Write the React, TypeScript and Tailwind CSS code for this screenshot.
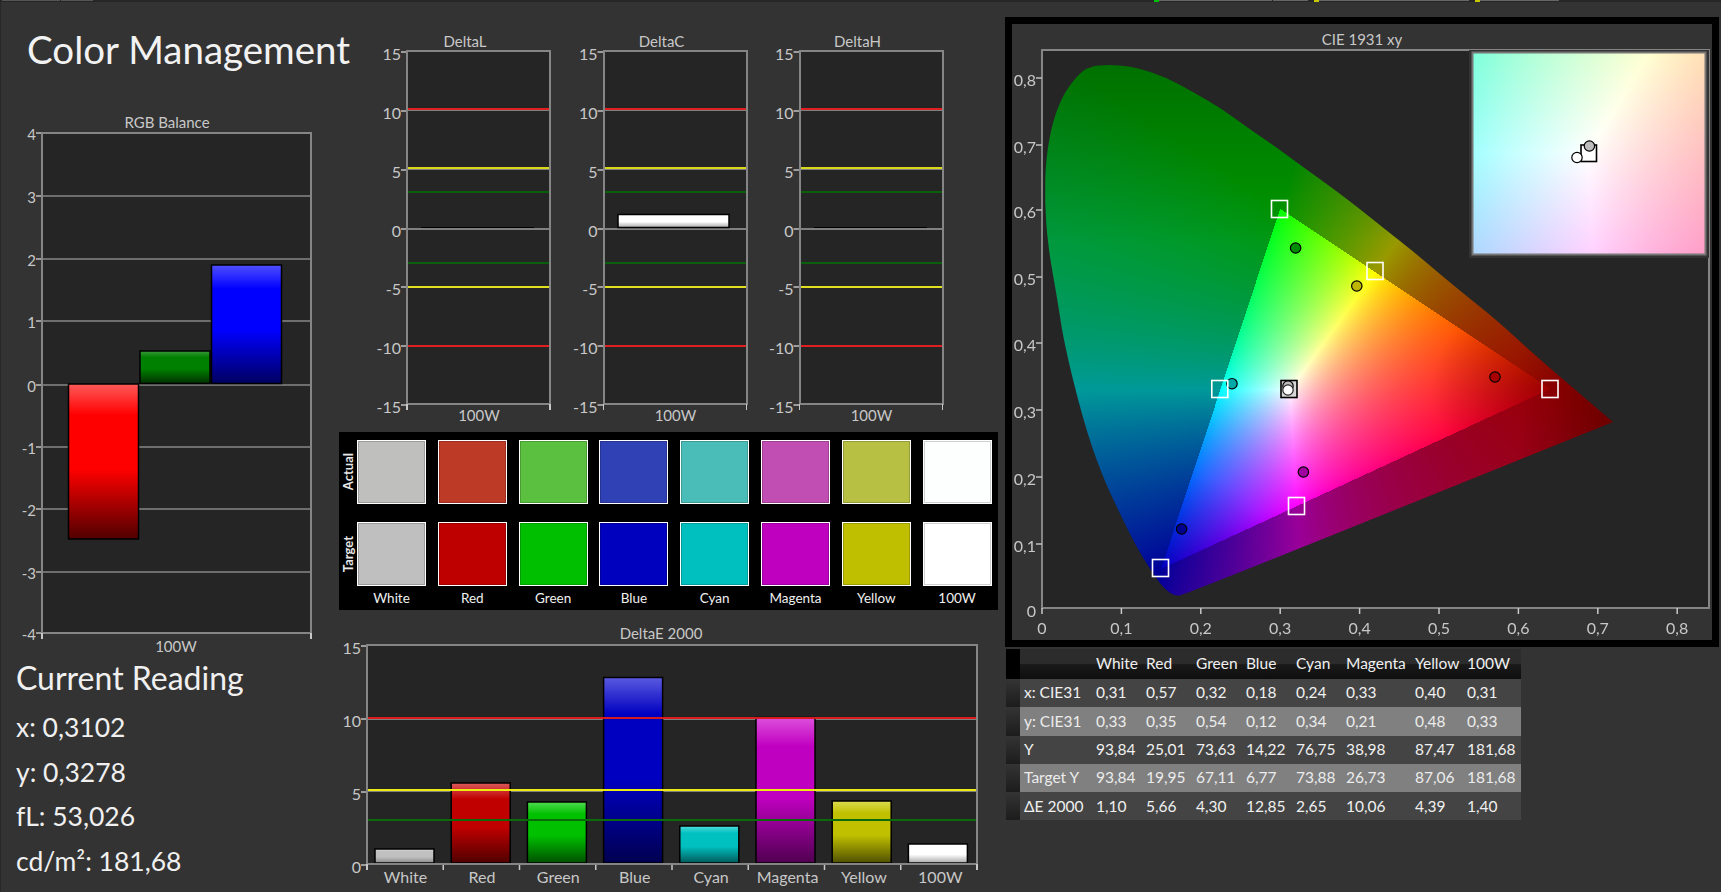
import type { ReactNode } from "react"

const FONT = "font-['Lato','Liberation_Sans',sans-serif]"

// bar gradients: top highlight, body, dark foot
const GRADIENTS: Record<string, string[]> = {
  rgbRed: ["#ff5a5a", "#ff0000", "#ff0000", "#500000"],
  rgbGreen: ["#3a9a3a", "#008000", "#008000", "#003000"],
  rgbBlue: ["#5050ff", "#0000ff", "#0000ff", "#000060"],
  white: ["#dcdcdc", "#c0c0c0", "#c0c0c0", "#8c8c8c"],
  red: ["#dc5a5a", "#c00000", "#c00000", "#500000"],
  green: ["#50dc50", "#00c000", "#00c000", "#005000"],
  blue: ["#5a5ae0", "#0000c0", "#0000c0", "#000050"],
  cyan: ["#50dcdc", "#00c0c0", "#00c0c0", "#005a5a"],
  magenta: ["#dc50dc", "#c000c0", "#c000c0", "#500050"],
  yellow: ["#dcdc50", "#c0c000", "#c0c000", "#505000"],
  full: ["#ffffff", "#ffffff", "#ffffff", "#a8a8a8"],
}

function Gradients() {
  return (
    <svg className="absolute h-0 w-0">
      <defs>
        {Object.entries(GRADIENTS).map(([id, c]) => (
          <linearGradient key={id} id={id} x1="0" y1="0" x2="0" y2="1">
            <stop offset="0" stopColor={c[0]} />
            <stop offset="0.2" stopColor={c[1]} />
            <stop offset="0.55" stopColor={c[2]} />
            <stop offset="1" stopColor={c[3]} />
          </linearGradient>
        ))}
      </defs>
    </svg>
  )
}

function Bar({ x, y, w, b, fill }: { x: number; y: number; w: number; b: number; fill: string }) {
  return <rect x={x} y={y} width={w} height={b - y} fill={`url(#${fill})`} stroke="#000" strokeWidth="1.5" />
}

function Plot({ l, t, r, b }: { l: number; t: number; r: number; b: number }) {
  return <rect x={l} y={t} width={r - l} height={b - t} fill="#252525" />
}

function Border({ l, t, r, b }: { l: number; t: number; r: number; b: number }) {
  return (
    <g shapeRendering="crispEdges">
      <rect x={l} y={t} width={r - l} height={b - t} fill="none" stroke="#858585" strokeWidth="2" />
      <line x1={l} x2={l} y1={b} y2={b + 6} stroke="#c8c8c8" strokeWidth="1.5" />
      <line x1={r} x2={r} y1={b} y2={b + 6} stroke="#c8c8c8" strokeWidth="1.5" />
    </g>
  )
}

function YTick({ x, y, label, size = 16 }: { x: number; y: number; label: string; size?: number }) {
  return (
    <g>
      <line x1={x - 6} x2={x} y1={y} y2={y} stroke="#c0c0c0" strokeWidth="1.5" />
      <text x={x - 6} y={y + 1} textAnchor="end" dominantBaseline="central" fontSize={size} fill="#c8c8c8">
        {label}
      </text>
    </g>
  )
}

function Hline({ l, r, y, color, w = 2 }: { l: number; r: number; y: number; color: string; w?: number }) {
  return <line x1={l} x2={r} y1={y} y2={y} stroke={color} strokeWidth={w} shapeRendering="crispEdges" />
}

function Label({ x, y, size = 15, children }: { x: number; y: number; size?: number; children: ReactNode }) {
  return (
    <text x={x} y={y} textAnchor="middle" dominantBaseline="central" fontSize={size} fill="#c8c8c8">
      {children}
    </text>
  )
}

function RgbBalance() {
  const ticks: [string, number][] = [
    ["4", 133], ["3", 196], ["2", 259], ["1", 321], ["0", 385], ["-1", 447], ["-2", 509], ["-3", 572], ["-4", 633],
  ]
  return (
    <svg width="339" height="555" viewBox="0 110 339 555" className="block">
      <Label x={167} y={122}>RGB Balance</Label>
      <Plot l={42} t={133} r={311} b={633} />
      {ticks.map(([t, y]) => (
        <g key={t}>
          <Hline l={42} r={311} y={y} color="#6e6e6e" />
          <YTick x={42} y={y} label={t} size={15} />
        </g>
      ))}
      <Border l={42} t={133} r={311} b={633} />
      <Bar x={68.5} y={384} w={70} b={539} fill="rgbRed" />
      <Bar x={140} y={351} w={70} b={383.5} fill="rgbGreen" />
      <Bar x={211.5} y={265} w={70} b={383.5} fill="rgbBlue" />
      <Label x={176} y={646}>100W</Label>
    </svg>
  )
}

function DeltaChart({ name, l, bar }: { name: string; l: number; bar: "line" | "white" }) {
  const r = l + 143
  const ticks: [string, number][] = [
    ["15", 52], ["10", 111], ["5", 170], ["0", 229], ["-5", 287], ["-10", 346], ["-15", 405],
  ]
  return (
    <g>
      <Label x={l + 58} y={41}>{name}</Label>
      <Plot l={l} t={51} r={r} b={404} />
      <Hline l={l} r={r} y={110.5} color="#808080" w={1} />
      <Hline l={l} r={r} y={169.5} color="#808080" w={1} />
      <Hline l={l} r={r} y={229} color="#808080" />
      <Hline l={l} r={r} y={109} color="#e02020" />
      <Hline l={l} r={r} y={168} color="#d8d818" />
      <Hline l={l} r={r} y={192} color="#0a5f0a" />
      <Hline l={l} r={r} y={263} color="#0a5f0a" />
      <Hline l={l} r={r} y={287} color="#e0e020" />
      <Hline l={l} r={r} y={346} color="#e02020" />
      {ticks.map(([t, y]) => (
        <YTick key={t} x={l} y={y} label={t} />
      ))}
      <Border l={l} t={51} r={r} b={404} />
      {bar === "line" ? (
        <line x1={l + 14} x2={l + 127} y1={227.5} y2={227.5} stroke="#000" strokeWidth="1" shapeRendering="crispEdges" />
      ) : (
        <Bar x={l + 14.5} y={214.5} w={111} b={227.5} fill="full" />
      )}
      <Label x={l + 72} y={415}>100W</Label>
    </g>
  )
}

const ACTUAL = ["#bfc0bd", "#bc3a26", "#5bc03f", "#2f41b5", "#4bbdb9", "#c14fb3", "#b8c044", "#fdfffe"]
const TARGET = ["#bfbfbf", "#bf0000", "#00bf00", "#0000bf", "#00bfbf", "#bf00bf", "#bfbf00", "#ffffff"]
const NAMES = ["White", "Red", "Green", "Blue", "Cyan", "Magenta", "Yellow", "100W"]

function SwatchRow({ title, colors }: { title: string; colors: string[] }) {
  return (
    <div className="flex h-[64px]">
      <div className="flex w-[18px] items-center justify-center">
        <span className="rotate-180 text-[13px] font-bold leading-none text-[#e8e8e8] [writing-mode:vertical-rl]">{title}</span>
      </div>
      <div className="grid grid-cols-[repeat(8,69px)] gap-x-[11.8px]">
        {colors.map((c) => (
          <div
            key={c}
            className="border border-white shadow-[inset_0_0_0_1px_rgba(0,0,0,0.18)]"
            style={{ backgroundColor: c }}
          />
        ))}
      </div>
    </div>
  )
}

function Swatches() {
  return (
    <div className="flex h-[178px] w-[659px] flex-col gap-y-[18px] bg-black pt-[8px]">
      <SwatchRow title="Actual" colors={ACTUAL} />
      <div className="flex flex-col">
        <SwatchRow title="Target" colors={TARGET} />
        <div className="ml-[18px] grid grid-cols-[repeat(8,69px)] gap-x-[11.8px] pt-[3px]">
          {NAMES.map((n) => (
            <span key={n} className="text-center text-[13.5px] leading-[18px] text-[#f0f0f0]">{n}</span>
          ))}
        </div>
      </div>
    </div>
  )
}

function DeltaE() {
  const bars: [string, number, string][] = [
    ["White", 849, "white"], ["Red", 783, "red"], ["Green", 802, "green"], ["Blue", 677.5, "blue"],
    ["Cyan", 826, "cyan"], ["Magenta", 717.5, "magenta"], ["Yellow", 801, "yellow"], ["100W", 844, "full"],
  ]
  return (
    <svg width="659" height="272" viewBox="339 620 659 272" className="block">
      <Label x={661} y={633}>DeltaE 2000</Label>
      <Plot l={367} t={645} r={977} b={864} />
      <Hline l={367} r={977} y={719.5} color="#808080" w={1} />
      <Hline l={367} r={977} y={791.5} color="#808080" w={1} />
      {bars.map(([n, y, g], i) => (
        <g key={n}>
          <Bar x={375 + i * 76.2} y={y} w={59} b={863} fill={g} />
          <line x1={367 + i * 76.25} x2={367 + i * 76.25} y1={864} y2={870} stroke="#c8c8c8" strokeWidth="1.5" />
          <Label x={405.5 + i * 76.4} y={876} size={16}>{n}</Label>
        </g>
      ))}
      <Hline l={367} r={977} y={718} color="#d81c1c" />
      <Hline l={367} r={977} y={790} color="#ecec10" />
      <Hline l={367} r={977} y={820} color="#0b6b0b" />
      <YTick x={367} y={646} label="15" />
      <YTick x={367} y={719} label="10" />
      <YTick x={367} y={792} label="5" />
      <YTick x={367} y={865} label="0" />
      <Border l={367} t={645} r={977} b={864} />
    </svg>
  )
}

// traced outline of the spectral locus, in page pixels
const LOCUS = [
  [1087, 68], [1099, 65], [1119.5, 65], [1138, 68], [1165.5, 77], [1193, 92], [1220.7, 108], [1248, 128],
  [1276, 147], [1303, 167], [1331, 187], [1358.6, 208], [1386, 230], [1414, 252], [1441, 275], [1469, 298],
  [1496.6, 320], [1538, 358], [1613, 422], [1184, 595], [1175, 596], [1165.5, 590], [1156, 578], [1138, 550],
  [1119.5, 513], [1101, 473], [1083, 420], [1064, 343], [1057.5, 300], [1048, 247], [1044.6, 200], [1046, 157],
  [1053, 120], [1064, 93], [1078, 75],
]

const clamp = (n: number) => Math.min(1, Math.max(0, n))

function shade(u: number, v: number, inset: boolean) {
  const X = u / v
  const Z = (1 - u - v) / v
  const rl = 3.2406 * X - 1.5372 - 0.4986 * Z
  const gl = -0.9689 * X + 1.8758 + 0.0415 * Z
  const bl = 0.0557 * X - 0.204 + 1.057 * Z
  const inside = rl >= 0 && gl >= 0 && bl >= 0
  const r = Math.max(rl, 0)
  const g = Math.max(gl, 0)
  const b = Math.max(bl, 0)
  const m = Math.max(r, g, b, 0.0001)
  let f = 1
  if (!inset) {
    if (inside) {
      f *= 1 - 0.4 * clamp(1 - Math.hypot(u - 0.64, v - 0.33) / 0.15)
      f *= 1 - 0.25 * clamp(1 - Math.hypot(u - 0.15, v - 0.06) / 0.15)
    } else {
      f = 0.6 - 0.6 * Math.max(0, v - 0.55) - 1.5 * Math.max(0, u - 0.6)
    }
  }
  const gamma = inset ? 1 / 2.2 : 1 / 1.2
  const ch = (c: number) => 255 * f * Math.pow(c / m, gamma)
  return [ch(r), ch(g), ch(b)]
}

function paintPixels(c: HTMLCanvasElement, at: (x: number, y: number) => number[]) {
  const ctx = c.getContext("2d")
  if (!ctx) return
  const img = ctx.createImageData(c.width, c.height)
  for (let y = 0; y < c.height; y++) {
    for (let x = 0; x < c.width; x++) {
      const [r, g, b] = at(x + 0.5, y + 0.5)
      const i = (y * c.width + x) * 4
      img.data[i] = r
      img.data[i + 1] = g
      img.data[i + 2] = b
      img.data[i + 3] = 255
    }
  }
  ctx.putImageData(img, 0, 0)
  return ctx
}

function paintDiagram(c: HTMLCanvasElement | null) {
  if (!c) return
  const ctx = paintPixels(c, (x, y) => shade(x / 794, (609 - (y + 50)) / 667, false))
  if (!ctx) return
  const pts = LOCUS.map(([x, y]) => [x - 1042, y - 50])
  const mid = (a: number[], b: number[]) => [(a[0] + b[0]) / 2, (a[1] + b[1]) / 2]
  const start = mid(pts[pts.length - 1], pts[0])
  ctx.globalCompositeOperation = "destination-in"
  ctx.beginPath()
  ctx.moveTo(start[0], start[1])
  pts.forEach((p, i) => {
    const m = mid(p, pts[(i + 1) % pts.length])
    if (LOCUS[i][0] === 1613) ctx.lineTo(p[0], p[1])
    if (LOCUS[i][0] === 1613) ctx.lineTo(m[0], m[1])
    else ctx.quadraticCurveTo(p[0], p[1], m[0], m[1])
  })
  ctx.closePath()
  ctx.fill()
}

function paintInset(c: HTMLCanvasElement | null) {
  if (!c) return
  paintPixels(c, (x, y) => shade(0.3127 + (x + 1473 - 1588.5) / 2300, 0.329 - (y + 53 - 153) / 2300, true))
}

function Target({ x, y, stroke = "#fff", fill = "none" }: { x: number; y: number; stroke?: string; fill?: string }) {
  return <rect x={x - 8} y={y - 8.5} width={16} height={17} fill={fill} stroke={stroke} strokeWidth="1.6" />
}

function Dot({ x, y, fill }: { x: number; y: number; fill: string }) {
  return <circle cx={x} cy={y} r={5.2} fill={fill} stroke="#000" strokeWidth="1.2" />
}

function CieChart() {
  const yTicks: [string, number][] = [
    ["0,8", 78], ["0,7", 145], ["0,6", 210], ["0,5", 277], ["0,4", 343], ["0,3", 410], ["0,2", 477], ["0,1", 544],
  ]
  const xTicks = ["0", "0,1", "0,2", "0,3", "0,4", "0,5", "0,6", "0,7", "0,8"]
  return (
    <div className="h-[630px] w-[714px] border-[7px] border-black">
      <svg width="700" height="616" viewBox="1012 24 700 616" className="block">
        <Label x={1362} y={39}>CIE 1931 xy</Label>
        <Plot l={1042} t={50} r={1709} b={608} />
        <foreignObject x={1042} y={50} width={667} height={558}>
          <canvas ref={paintDiagram} width={667} height={558} className="block" />
        </foreignObject>
        <rect x={1042} y={50} width={667} height={558} fill="none" stroke="#858585" strokeWidth="2" shapeRendering="crispEdges" />
        {yTicks.map(([t, y]) => (
          <YTick key={t} x={1042} y={y} label={t} />
        ))}
        <text x={1036} y={610} textAnchor="end" dominantBaseline="central" fontSize={16} fill="#c8c8c8">0</text>
        {xTicks.map((t, i) => (
          <g key={t}>
            <line x1={1042 + i * 79.4} x2={1042 + i * 79.4} y1={608} y2={614} stroke="#c8c8c8" strokeWidth="1.5" />
            <Label x={1042 + i * 79.4} y={627} size={16}>{t}</Label>
          </g>
        ))}

        <Dot x={1295.6} y={248} fill="#008c00" />
        <Dot x={1356.8} y={286} fill="#bdb500" />
        <Dot x={1232} y={383.7} fill="#00a8a8" />
        <Dot x={1495} y={377} fill="#a80000" />
        <Dot x={1303.4} y={472} fill="#a000a0" />
        <Dot x={1181.6} y={529} fill="#000090" />

        <Target x={1279.5} y={209} />
        <Target x={1375} y={271} />
        <Target x={1219.8} y={389} />
        <Target x={1550} y={389} />
        <Target x={1296.5} y={506} />
        <Target x={1160.5} y={568} />

        <Target x={1289} y={389} stroke="#000" fill="#d8d8d8" />
        <Dot x={1288} y={386} fill="#bdbdbd" />
        <circle cx={1288} cy={390} r={5.2} fill="#fff" stroke="#222" strokeWidth="1.2" />

        <rect x={1469} y={50} width={240} height={208} fill="#333" />
        <foreignObject x={1473} y={53} width={232} height={201}>
          <canvas ref={paintInset} width={232} height={201} className="block" />
        </foreignObject>
        <rect x={1472.5} y={52.5} width={233} height={202} fill="none" stroke="#777" strokeWidth="2" />
        <rect x={1581} y={145} width={15.5} height={16.5} fill="#fff" stroke="#000" strokeWidth="1.6" />
        <Dot x={1589.4} y={146} fill="#bdbdbd" />
        <Dot x={1577} y={157.5} fill="#fff" />
      </svg>
    </div>
  )
}

const COLS = "grid h-full grid-cols-[14px_76px_50px_50px_50px_50px_50px_69px_52px_54px] items-center"

const ROWS: { label: string; values: string[]; light?: boolean }[] = [
  { label: "x: CIE31", values: ["0,31", "0,57", "0,32", "0,18", "0,24", "0,33", "0,40", "0,31"] },
  { label: "y: CIE31", values: ["0,33", "0,35", "0,54", "0,12", "0,34", "0,21", "0,48", "0,33"], light: true },
  { label: "Y", values: ["93,84", "25,01", "73,63", "14,22", "76,75", "38,98", "87,47", "181,68"] },
  { label: "Target Y", values: ["93,84", "19,95", "67,11", "6,77", "73,88", "26,73", "87,06", "181,68"], light: true },
  { label: "ΔE 2000", values: ["1,10", "5,66", "4,30", "12,85", "2,65", "10,06", "4,39", "1,40"] },
]

function ReadingsTable() {
  return (
    <div className="ml-px mt-[2px] w-[515px] text-[15.5px] leading-none text-[#f0f0f0]">
      <div className="h-[30px] bg-[linear-gradient(180deg,#2c2c2c_0%,#2c2c2c_48%,#1a1a1a_52%,#0e0e0e_100%)]">
        <div className={COLS}>
          <span className="h-full bg-black" />
          <span />
          {NAMES.map((n) => (
            <span key={n} className="whitespace-nowrap">{n}</span>
          ))}
        </div>
      </div>
      {ROWS.map((row) => (
        <div key={row.label} className={row.light ? "h-[28.3px] bg-[#808080] text-[#ececec]" : "h-[28.3px] bg-[#444444]"}>
          <div className={COLS}>
            <span className="h-full bg-[linear-gradient(180deg,#343434_0%,#1c1c1c_100%)]" />
            <span className="pl-[4px] whitespace-nowrap">{row.label}</span>
            {row.values.map((v, i) => (
              <span key={i}>{v}</span>
            ))}
          </div>
        </div>
      ))}
    </div>
  )
}

export default function App() {
  return (
    <div className={`h-[892px] w-[1721px] overflow-hidden bg-[#333333] shadow-[inset_1px_0_0_#282828] ${FONT}`}>
      <Gradients />
      <div className="flex h-[2px] bg-[#262626]">
        <div className="ml-[2px] h-px w-[58px] bg-[#555]" />
        <div className="ml-px h-px w-[32px] bg-[#555]" />
        <div className="ml-[1061px] h-[2px] w-[5px] bg-[#00c000]" />
        <div className="h-px w-[113px] bg-[#666]" />
        <div className="ml-px h-px w-[35px] bg-[#666]" />
        <div className="ml-[6px] h-[2px] w-[5px] bg-[#c8c800]" />
        <div className="h-px w-[150px] bg-[#666]" />
        <div className="ml-[6px] h-[2px] w-[5px] bg-[#c8c800]" />
        <div className="h-px w-[79px] bg-[#666]" />
      </div>
      <div className="flex">
        <div className="w-[339px] shrink-0">
          <h1 className="h-[108px] whitespace-nowrap pl-[27px] pt-[24px] text-[38.5px] font-normal leading-[46px] text-[#f2f2f2]">Color Management</h1>
          <RgbBalance />
          <div className="-mt-[6px] pl-[16px] text-[#f0f0f0]">
            <p className="text-[32px] leading-[38px]">Current Reading</p>
            <p className="mt-[8px] text-[26.5px] leading-[44.5px]">x: 0,3102</p>
            <p className="text-[26.5px] leading-[44.5px]">y: 0,3278</p>
            <p className="text-[26.5px] leading-[44.5px]">fL: 53,026</p>
            <p className="text-[26.5px] leading-[44.5px]">cd/m²: 181,68</p>
          </div>
        </div>
        <div className="w-[659px] shrink-0 pt-[28px]">
          <svg width="659" height="402" viewBox="339 30 659 402" className="block">
            <DeltaChart name="DeltaL" l={407} bar="line" />
            <DeltaChart name="DeltaC" l={603.5} bar="white" />
            <DeltaChart name="DeltaH" l={799.5} bar="line" />
          </svg>
          <Swatches />
          <div className="mt-[10px]">
            <DeltaE />
          </div>
        </div>
        <div className="ml-[7px] shrink-0 pt-[15px]">
          <CieChart />
          <ReadingsTable />
        </div>
      </div>
    </div>
  )
}
